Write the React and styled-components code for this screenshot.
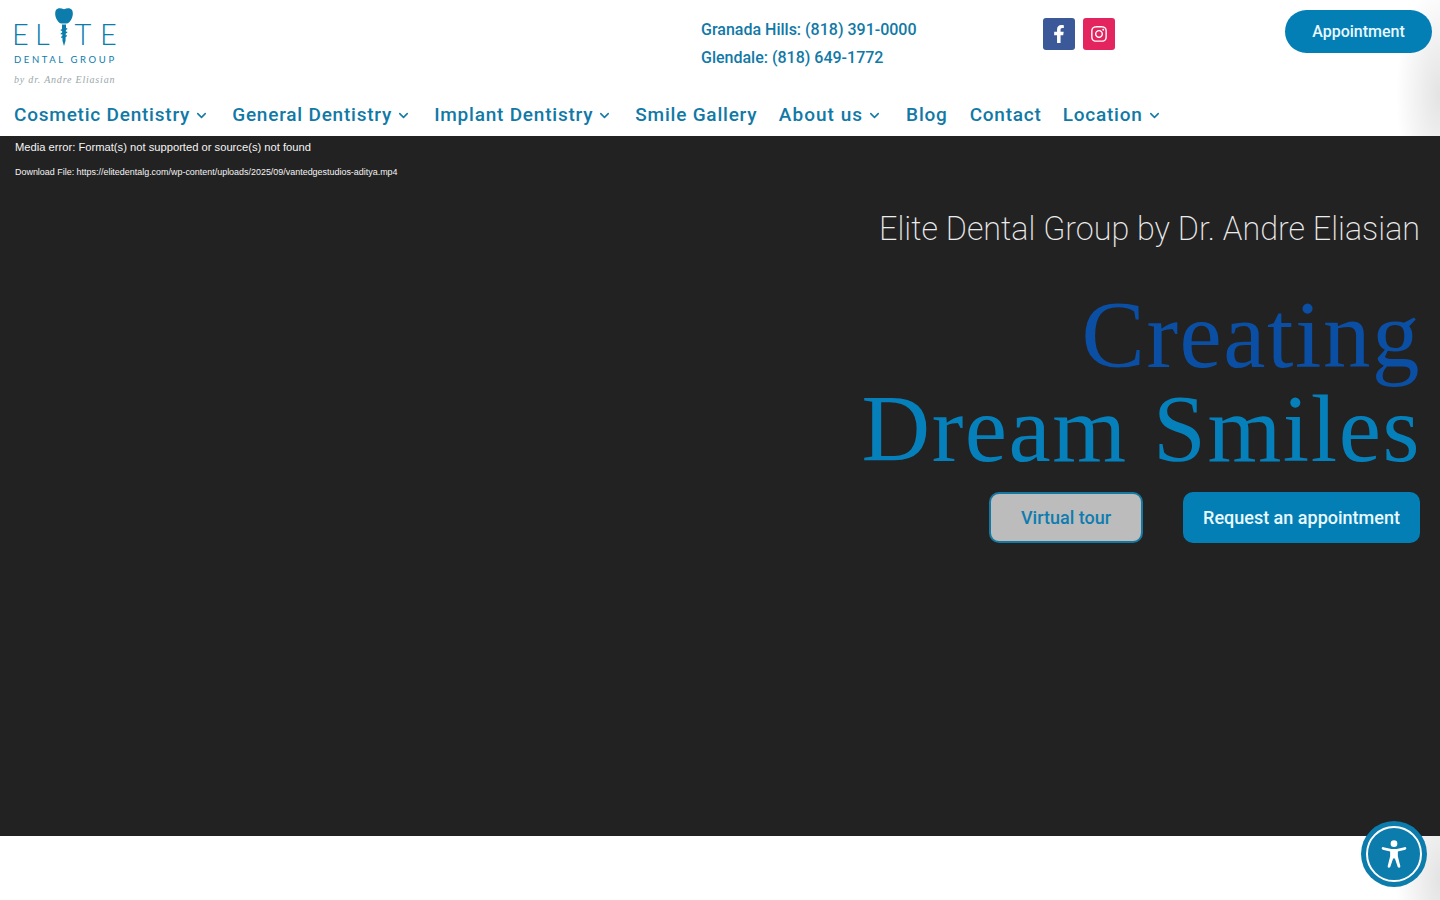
import styled, { createGlobalStyle } from "styled-components";
import { FaFacebookF, FaInstagram } from "react-icons/fa";
import { ChevronDown } from "lucide-react";

const GlobalStyle = createGlobalStyle`
  html, body {
    margin: 0;
    padding: 0;
    background: #fff;
    font-family: Roboto, sans-serif;
  }
`;

const Page = styled.div`
  position: relative;
  height: 900px;
  overflow: hidden;
`;

const Header = styled.header`
  height: 136px;
  position: relative;
  background: #fff;
`;

const TopRow = styled.div`
  position: relative;
  z-index: 1;
  display: grid;
  grid-template-columns: 688px 342px 242px 147px;
  padding-left: 13px;
  height: 96px;
`;

const Logo = styled.div`
  padding-top: 8px;
  width: 104px;
  color: #0b7cab;
`;

const LogoMark = styled.div`
  display: grid;
  grid-template-columns: 23px 20px 19.5px 25.5px 15px;
  height: 38px;
  margin-left: -1px;
  font-family: Lato, sans-serif;
  font-size: 29px;
  font-weight: 300;
  line-height: 24px;
`;

const LogoLetter = styled.span`
  display: block;
  height: 24px;
  align-self: end;
`;

const LogoSub = styled.div`
  margin-top: 9px;
  padding-left: 1px;
  font-family: Lato, sans-serif;
  font-weight: 400;
  font-size: 9.5px;
  letter-spacing: 2.6px;
  white-space: nowrap;
  line-height: 10px;
`;

const LogoSign = styled.div`
  margin-top: 9px;
  padding-left: 1px;
  font-family: "Liberation Serif", serif;
  font-style: italic;
  font-size: 10px;
  letter-spacing: 0.8px;
  line-height: 12px;
  white-space: nowrap;
  color: #9aa8ab;
`;

const Contacts = styled.div`
  display: flex;
  flex-direction: column;
  gap: 8px;
  padding-top: 20px;
  font-size: 16px;
  font-weight: 500;
  line-height: 20px;
  color: #1179a6;
`;

const Socials = styled.div`
  display: flex;
  gap: 8px;
  padding-top: 18px;
`;

const SocialLink = styled.a`
  width: 32px;
  height: 32px;
  border-radius: 3px;
  display: flex;
  align-items: center;
  justify-content: center;
  color: #fff;
  font-size: 18px;
  background: ${(p) => p.$bg};
`;

const PillButton = styled.a`
  margin-top: 10px;
  height: 43px;
  border-radius: 22px;
  background: #037fb5;
  color: #e8f8ff;
  display: flex;
  align-items: center;
  justify-content: center;
  font-size: 16px;
  font-weight: 500;
`;

const Nav = styled.nav`
  position: relative;
  z-index: 1;
  display: flex;
  padding-left: 14px;
  height: 40px;
  align-items: flex-start;
  padding-top: 8px;
  box-sizing: border-box;
`;

const NavItem = styled.a`
  display: flex;
  align-items: center;
  gap: 4px;
  font-size: 19px;
  font-weight: 500;
  letter-spacing: ${(p) => p.$tracking || 0.78}px;
  line-height: 22px;
  color: #1179a6;
  white-space: nowrap;
  margin-right: ${(p) => p.$gap}px;
`;

const CornerFade = styled.div`
  position: absolute;
  top: 0;
  right: 0;
  bottom: 0;
  width: 44px;
  background: radial-gradient(ellipse 44px 110px at 100% 70%, rgba(222, 222, 222, 0.85), rgba(222, 222, 222, 0));
  pointer-events: none;
`;

const Hero = styled.section`
  height: 700px;
  background: #222222;
  position: relative;
  padding: 0 20px 0 15px;
  box-sizing: border-box;
`;

const MediaError = styled.div`
  font-family: "Liberation Sans", sans-serif;
  color: #f4f4f4;
  font-size: 11.2px;
  line-height: 13px;
  padding-top: 5px;
`;

const MediaLink = styled.div`
  font-family: "Liberation Sans", sans-serif;
  color: #f4f4f4;
  font-size: 8.95px;
  line-height: 11px;
  margin-top: 13px;
`;

const HeroBody = styled.div`
  display: flex;
  flex-direction: column;
  align-items: flex-end;
  padding-top: 31px;
`;

const HeroLead = styled.p`
  margin: 0;
  font-weight: 200;
  font-size: 32.3px;
  line-height: 40px;
  color: #ececec;
`;

const HeroTitle = styled.h1`
  margin: 39px -1px 0 0;
  font-family: "Liberation Serif", serif;
  font-weight: 400;
  font-size: 95px;
  line-height: 94px;
  letter-spacing: 1.55px;
  text-align: right;
`;

const TitleLine = styled.span`
  display: block;
  color: ${(p) => p.$color};
`;

const HeroActions = styled.div`
  display: flex;
  gap: 40px;
  margin-top: 16px;
`;

const OutlineButton = styled.a`
  width: 154px;
  height: 51px;
  box-sizing: border-box;
  padding-bottom: 1px;
  border: 2px solid #1478a3;
  border-radius: 10px;
  background: #bcbcbc;
  color: #0f7cb0;
  display: flex;
  align-items: center;
  justify-content: center;
  font-size: 18px;
  font-weight: 500;
`;

const SolidButton = styled.a`
  width: 237px;
  height: 51px;
  box-sizing: border-box;
  padding-bottom: 1px;
  border-radius: 10px;
  background: #037fb5;
  color: #e8f8ff;
  display: flex;
  align-items: center;
  justify-content: center;
  font-size: 18px;
  font-weight: 500;
`;

const Footer = styled.div`
  position: relative;
  height: 64px;
  background: #fff;
`;

const A11yButton = styled.button`
  position: absolute;
  right: 13px;
  bottom: 13px;
  width: 66px;
  height: 66px;
  padding: 0;
  border: 0;
  border-radius: 50%;
  background: #0b7cab;
  display: flex;
  align-items: center;
  justify-content: center;
`;

const A11yRing = styled.span`
  width: 56px;
  height: 56px;
  box-sizing: border-box;
  border: 2px solid #fff;
  border-radius: 50%;
  display: flex;
  align-items: center;
  justify-content: center;
`;

const navItems = [
  { label: "Cosmetic Dentistry", caret: true, gap: 23 },
  { label: "General Dentistry", caret: true, gap: 23 },
  { label: "Implant Dentistry", caret: true, gap: 23 },
  { label: "Smile Gallery", gap: 21.5 },
  { label: "About us", caret: true, gap: 24, tracking: 1.03 },
  { label: "Blog", gap: 22 },
  { label: "Contact", gap: 21 },
  { label: "Location", caret: true, gap: 0 },
];

function ToothImplant() {
  return (
    <svg width="18" height="38" viewBox="0 0 18 38" fill="#0b7cab">
      <path d="M1 2C2.5 0 5.5 -.2 9 1.2C12.5 -.2 15.5 0 17 2C18.3 4 18 8 16.5 11C15.2 13.5 13.5 15.5 11.5 15.5H6.5C4.5 15.5 2.8 13.5 1.5 11C0 8 -.3 4 1 2Z" />
      <path d="M7 16.5H11V20L10.5 33L9 38L7.5 33L7 20Z" />
      <path d="M5.8 21.5L12.2 20V21.5L5.8 23ZM5.8 25L12.2 23.5V25L5.8 26.5ZM6.2 28.5L11.8 27V28.5L6.2 30Z" />
    </svg>
  );
}

function A11yFigure() {
  return (
    <svg width="26" height="28" viewBox="0 0 28 32" fill="#fff">
      <circle cx="14" cy="4.2" r="3.8" />
      <path d="M2 8.2C1 7.8 .2 8.3 0 9.2C-.2 10 .3 10.8 1.1 11L9.6 13.2V18.5L6.8 29.6C6.6 30.6 7.2 31.4 8 31.6C8.9 31.8 9.7 31.3 9.9 30.4L13 21H15L18.1 30.4C18.3 31.3 19.1 31.8 20 31.6C20.8 31.4 21.4 30.6 21.2 29.6L18.4 18.5V13.2L26.9 11C27.7 10.8 28.2 10 28 9.2C27.8 8.3 27 7.8 26 8.2L17 10.2H11Z" />
    </svg>
  );
}

export default function App() {
  return (
    <Page>
      <GlobalStyle />
      <Header>
        <TopRow>
          <Logo>
            <LogoMark>
              <LogoLetter>E</LogoLetter>
              <LogoLetter>L</LogoLetter>
              <ToothImplant />
              <LogoLetter>T</LogoLetter>
              <LogoLetter>E</LogoLetter>
            </LogoMark>
            <LogoSub>DENTAL GROUP</LogoSub>
            <LogoSign>by dr. Andre Eliasian</LogoSign>
          </Logo>
          <Contacts>
            <div>Granada Hills: (818) 391-0000</div>
            <div>Glendale: (818) 649-1772</div>
          </Contacts>
          <Socials>
            <SocialLink $bg="#3b5998">
              <FaFacebookF />
            </SocialLink>
            <SocialLink $bg="#e4245f">
              <FaInstagram />
            </SocialLink>
          </Socials>
          <PillButton>Appointment</PillButton>
        </TopRow>
        <Nav>
          {navItems.map((item) => (
            <NavItem key={item.label} $gap={item.gap} $tracking={item.tracking}>
              {item.label}
              {item.caret && <ChevronDown size={15} strokeWidth={2.4} />}
            </NavItem>
          ))}
        </Nav>
        <CornerFade />
      </Header>
      <Hero>
        <MediaError>Media error: Format(s) not supported or source(s) not found</MediaError>
        <MediaLink>
          Download File: https://elitedentalg.com/wp-content/uploads/2025/09/vantedgestudios-aditya.mp4
        </MediaLink>
        <HeroBody>
          <HeroLead>Elite Dental Group by Dr. Andre Eliasian</HeroLead>
          <HeroTitle>
            <TitleLine $color="#0a4fa3">Creating</TitleLine>
            <TitleLine $color="#0580bb">Dream Smiles</TitleLine>
          </HeroTitle>
          <HeroActions>
            <OutlineButton>Virtual tour</OutlineButton>
            <SolidButton>Request an appointment</SolidButton>
          </HeroActions>
        </HeroBody>
      </Hero>
      <Footer>
        <CornerFade />
      </Footer>
      <A11yButton aria-label="Accessibility">
        <A11yRing>
          <A11yFigure />
        </A11yRing>
      </A11yButton>
    </Page>
  );
}
